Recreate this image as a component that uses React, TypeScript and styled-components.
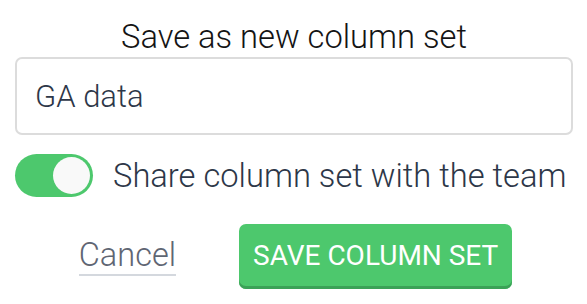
import { useState } from 'react'
import styled, { createGlobalStyle } from 'styled-components'

const GlobalStyle = createGlobalStyle`
    html, body {
        margin: 0;
        padding: 0;
        background: #ffffff;
    }
    body {
        font-family: Roboto, 'Liberation Sans', sans-serif;
    }
`

function App() {
    const [name, setName] = useState('GA data')
    const [shared, setShared] = useState(true)

    return (
        <>
            <GlobalStyle />
            <Dialog>
                <Title>Save as new column set</Title>
                <NameInput value={name} onChange={e => setName(e.target.value)} />
                <ShareRow>
                    <Toggle $on={shared} onClick={() => setShared(!shared)} aria-pressed={shared}>
                        <Knob $on={shared} />
                    </Toggle>
                    <ShareLabel>Share column set with the team</ShareLabel>
                </ShareRow>
                <Actions>
                    <CancelLink href="#">Cancel</CancelLink>
                    <SaveButton>SAVE COLUMN SET</SaveButton>
                </Actions>
            </Dialog>
        </>
    )
}

export default App

const Dialog = styled.div`
    display: flex;
    flex-direction: column;
    width: 558px;
    padding: 18px 14px 0 15px;
`

const Title = styled.div`
    text-align: center;
    font-size: 32.7px;
    font-weight: 300;
    color: #141414;
    line-height: 38px;
`

const NameInput = styled.input`
    box-sizing: border-box;
    width: 100%;
    height: 78px;
    margin-top: 1px;
    padding: 0 18px;
    border: 2px solid #dcdcdc;
    border-radius: 7px;
    font-family: Roboto, 'Liberation Sans', sans-serif;
    font-size: 31px;
    font-weight: 300;
    color: #2d3748;
    outline: none;
`

const ShareRow = styled.div`
    display: flex;
    align-items: center;
    gap: 20px;
    margin-top: 19px;
`

const Toggle = styled.button<{ $on: boolean }>`
    position: relative;
    flex: none;
    width: 78px;
    height: 43px;
    padding: 0;
    border: none;
    border-radius: 22px;
    background-color: ${p => (p.$on ? '#4dc86d' : '#cbd5e0')};
    cursor: pointer;
`

const Knob = styled.span<{ $on: boolean }>`
    position: absolute;
    top: 3px;
    left: ${p => (p.$on ? '38px' : '3px')};
    width: 37px;
    height: 37px;
    border-radius: 50%;
    background-color: #f9f9f9;
`

const ShareLabel = styled.span`
    font-size: 32.7px;
    font-weight: 300;
    color: #2d3748;
`

const Actions = styled.div`
    display: flex;
    justify-content: center;
    align-items: flex-start;
    gap: 63px;
    margin-top: 27px;
    padding-left: 3px;
`

const CancelLink = styled.a`
    margin-top: 13px;
    font-size: 32.5px;
    font-weight: 300;
    color: #5f6673;
    text-decoration: none;
    border-bottom: 2px solid #d4d8de;
    line-height: 37px;
`

const SaveButton = styled.button`
    height: 65px;
    padding: 0 14px 3px;
    border: none;
    border-radius: 7px;
    background-color: #4dc86d;
    box-shadow: inset 0 -3px 0 #3ba257;
    color: #ffffff;
    font-family: Roboto, 'Liberation Sans', sans-serif;
    font-size: 28px;
    font-weight: 400;
    cursor: pointer;
`
